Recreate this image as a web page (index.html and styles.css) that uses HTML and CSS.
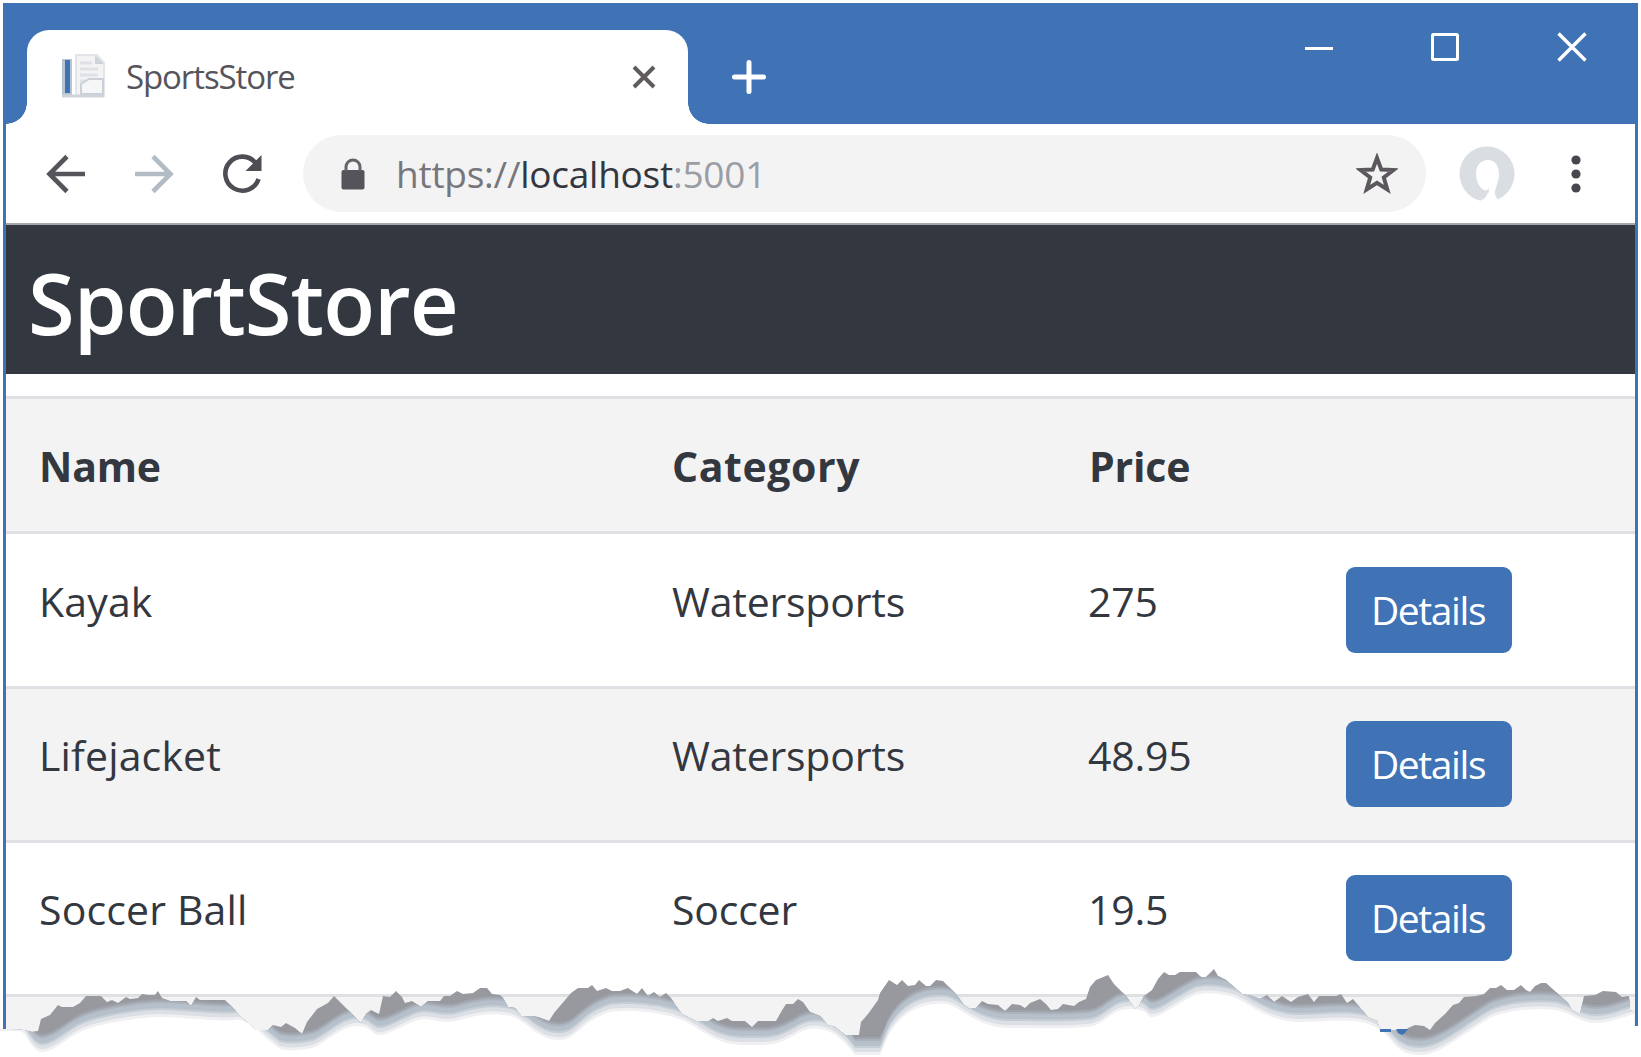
FILE: index.html
```html
<!DOCTYPE html>
<html lang="en">
<head>
<meta charset="utf-8">
<title>SportsStore</title>
<link rel="stylesheet" href="styles.css">
</head>
<body>
<div class="window">
  <header class="titlebar">
    <div class="tab">
      <svg class="favicon" width="44" height="46" viewBox="0 0 44 46">
        <path d="M15 1h21l7 8v33H15z" fill="#f3f3f4" stroke="#e4e5e9" stroke-width="2"/>
        <path d="M34 1v9h9z" fill="#cdd3da"/>
        <path d="M19 9h12M19 15h18M19 21h18M19 27h9" stroke="#dfe1e6" stroke-width="3"/>
        <path d="M20 40V30l8-5h14v15z" fill="#f6f6f7" stroke="#c9d0d8" stroke-width="2"/>
        <path d="M1 5h10v38H1z" fill="#b9c4d0"/>
        <path d="M4 6h5v33H4z" fill="#3f73b6"/>
        <path d="M1 42h42" stroke="#cfd4db" stroke-width="3"/>
      </svg>
      <span class="tab-title">SportsStore</span>
      <svg class="tab-close" width="24" height="24" viewBox="0 0 24 24"><path d="M2 2l20 20M22 2L2 22" stroke="#5f5b5e" stroke-width="4"/></svg>
    </div>
    <svg class="new-tab" width="34" height="34" viewBox="0 0 34 34"><path d="M17 2.500v29M2.500 17h29" stroke="#fff" stroke-width="5" stroke-linecap="round"/></svg>
    <div class="controls">
      <svg width="28" height="30" viewBox="0 0 28 30"><path d="M0 16.500h28" stroke="#fff" stroke-width="3"/></svg>
      <svg width="30" height="30" viewBox="0 0 30 30"><rect x="2.500" y="2.500" width="25" height="25" rx="1" fill="none" stroke="#fff" stroke-width="3"/></svg>
      <svg width="30" height="30" viewBox="0 0 30 30"><path d="M1.500 1.500l27 27M28.500 1.500l-27 27" stroke="#fff" stroke-width="3.400"/></svg>
    </div>
  </header>
  <nav class="toolbar">
    <svg class="nav-icon" width="40" height="40" viewBox="0 0 40 40"><path d="M39 20H4M21 2.500L3.500 20 21 37.500" fill="none" stroke="#55545a" stroke-width="4.600"/></svg>
    <svg class="nav-icon" width="40" height="40" viewBox="0 0 40 40"><path d="M1 20h35M19 2.500L36.500 20 19 37.500" fill="none" stroke="#b3bbc5" stroke-width="4.600"/></svg>
    <svg class="nav-icon" width="42" height="40" viewBox="0 0 42 40"><path d="M36.500 25A17 17 0 1 1 34 9.500" fill="none" stroke="#4e4d53" stroke-width="4.600"/><path d="M39.500 1v16H23.500z" fill="#4e4d53"/></svg>
    <div class="address">
      <svg class="lock" width="24" height="32" viewBox="0 0 24 32"><rect x="0.500" y="12" width="23" height="19.500" rx="2" fill="#55545b"/><path d="M5 13V9a7 7 0 0 1 14 0v4" fill="none" stroke="#66636a" stroke-width="3"/></svg>
      <span class="url"><span class="scheme">https://</span><span class="host">localhost</span><span class="port">:5001</span></span>
      <svg class="star" width="42" height="42" viewBox="0 0 42 42"><path d="M21 5l4.300 11.600 12.200.4-9.700 7.500 3.500 12L21 29.800l-10.300 6.700 3.500-12L4.500 17l12.200-.4z" fill="none" stroke="#5b575c" stroke-width="4"/></svg>
    </div>
    <svg class="avatar" width="56" height="56" viewBox="0 0 56 56"><circle cx="28" cy="28" r="27.500" fill="#dadde1"/><path d="M33 56c-3-3-4-9-3-15-1 3-2 4-5 3-5-3-8-9-8-16 0-9 5-14 12-14s11 6 11 14c0 8-4 13-4 19 0 3 2 6 4 7l-3 3zM22 54c4-1 6-4 7-8l4 8-3 3h-8z" fill="#fff"/></svg>
    <svg class="menu" width="10" height="38" viewBox="0 0 10 38"><g fill="#48474e"><circle cx="5" cy="5" r="4.600"/><circle cx="5" cy="19" r="4.600"/><circle cx="5" cy="33" r="4.600"/></g></svg>
  </nav>
  <h1 class="brand">SportStore</h1>
  <table class="products">
    <colgroup><col class="col-name"><col class="col-category"><col class="col-price"><col></colgroup>
    <thead>
      <tr class="head"><th>Name</th><th class="wide">Category</th><th>Price</th><th></th></tr>
    </thead>
    <tbody>
      <tr class="tall"><td class="name">Kayak</td><td>Watersports</td><td class="price">275</td><td class="action"><a class="btn">Details</a></td></tr>
      <tr class="striped"><td class="name">Lifejacket</td><td>Watersports</td><td class="price">48.95</td><td class="action"><a class="btn">Details</a></td></tr>
      <tr><td class="name">Soccer Ball</td><td>Soccer</td><td class="price">19.5</td><td class="action"><a class="btn">Details</a></td></tr>
      <tr class="striped"><td></td><td></td><td></td><td></td></tr>
    </tbody>
  </table>
</div>
<svg class="torn" width="1641" height="97" viewBox="0 960 1641 97">
  <defs>
    <clipPath id="paper"><path d="M0 1029H6L24 1030 32 1032 38 1031 41 1019 50 1015 58 1005 62 1007 73 1007 80 1003 86 996 101 996 107 1002 112 1000 118 1003 126 997 130 999 138 998 142 994 148 995 155 995 158 991 162 998 170 1001 186 1001 191 1006 196 997 200 1000 225 1000 233 1008 240 1016 256 1030 268 1030 273 1025 281 1027 286 1023 295 1028 302 1034 307 1022 317 1009 328 1003 334 996 340 1002 361 1023 366 1014 371 1010 379 1014 383 996 390 997 396 991 402 997 405 1003 412 1001 421 1007 428 1001 440 1001 444 996 450 996 457 991 463 994 473 993 480 988 487 988 492 994 500 995 503 998 508 1007 515 1008 522 1017 530 1016 538 1017 549 1021 554 1013 571 993 578 988 588 988 592 985 597 991 606 988 612 991 620 991 628 988 637 994 642 988 648 996 654 992 660 997 666 993 671 998 676 1006 682 1014 696 1021 709 1021 713 1018 718 1021 727 1018 732 1021 745 1021 752 1027 758 1021 776 1021 781 1012 786 1004 793 1004 798 999 803 1002 810 1012 820 1016 828 1025 835 1027 845 1035 859 1035 861 1022 868 1014 878 1000 880 993 889 980 897 985 902 980 908 986 915 985 919 980 926 986 930 986 936 980 943 981 949 987 956 994 964 1005 970 1009 976 1008 982 1001 988 1004 998 1005 1005 1011 1012 1004 1020 1005 1025 1008 1030 1003 1040 999 1046 1004 1051 1010 1058 1009 1063 1004 1074 1006 1079 1002 1086 999 1090 987 1096 980 1108 975 1114 984 1119 989 1126 996 1135 1009 1139 1006 1144 996 1152 990 1158 979 1164 972 1169 975 1175 975 1180 972 1196 972 1201 977 1206 977 1214 969 1218 976 1226 980 1242 994 1252 996 1260 999 1267 995 1274 1002 1282 996 1291 1002 1298 997 1308 994 1314 1002 1319 996 1336 996 1341 994 1347 1003 1353 999 1362 1010 1368 1017 1377 1021 1380 1030 1405 1031 1408 1028 1415 1025 1424 1026 1430 1030 1435 1023 1445 1014 1453 1005 1459 1003 1464 997 1476 996 1484 994 1490 988 1496 988 1501 985 1507 990 1514 990 1521 985 1526 990 1530 992 1535 986 1541 983 1546 983 1556 992 1568 1003 1572 1010 1580 1014 1584 996 1595 995 1603 991 1616 992 1622 997 1629 996 1630 1010 1634 1012V1026H1641V1057H0Z"/></clipPath>
    <path id="curl" d="M0 1029H20L25 1032Q34 1050 42 1050C54 1050 64 1038 80 1030S140 1015 160 1015 220 1020 235 1018 262 1035 280 1047C292 1050 302 1048 312 1046S340 1025 355 1024 372 1033 380 1033 400 1025 415 1019 440 1024 460 1018 495 1011 510 1014 535 1036 556 1038 578 1020 610 1010C630 1007 670 1010 690 1022S720 1043 745 1043 775 1045 800 1030C822 1020 840 1032 855 1053L880 1053C886 1042 886 1032 900 1018S930 1001 945 1002 975 1026 1010 1026 1070 1027 1088 1025 1110 1007 1130 1007 1145 1015 1153 1015 1175 1003 1195 993C1210 989 1230 993 1240 998S1270 1020 1300 1020 1365 1012 1385 1032C1395 1042 1400 1053 1420 1053S1460 1034 1490 1016C1510 1007 1540 1006 1555 1008S1580 1021 1595 1021 1620 1016 1634 1012H1641V1090H0Z"/>
  </defs>
  <g clip-path="url(#paper)">
    <path d="M0 960h1641v97H0z" fill="#97999f"/>
    <use href="#curl" y="-16" fill="#9fa3ab"/>
    <use href="#curl" y="-14" fill="#abb2bc"/>
    <use href="#curl" y="-12" fill="#b6c0cb"/>
    <use href="#curl" y="-7" fill="#c5cdd6"/>
    <use href="#curl" y="-5" fill="#dcdfe4"/>
    <use href="#curl" y="-1" fill="#f0f0f2"/>
    <use href="#curl" y="2" fill="#fff"/>
  </g>
  <path d="M1380 1029h11v3h-11zM1396 1029h12l-3 4-3 2-4-2z" fill="#3f73b6"/>
</svg>
</body>
</html>
```
FILE: styles.css
```css
* { box-sizing: border-box; }

body {
  margin: 0;
  height: 1057px;
  overflow: hidden;
  background: #fff;
  color: #33373f;
  font-family: "Open Sans", "Noto Sans", sans-serif;
  position: relative;
}

svg { display: block; flex: none; }

.window {
  margin: 3px 3px 0;
  height: 1054px;
  overflow: hidden;
  border: 3px solid #3f73b6;
  border-width: 0 3px;
}

.titlebar {
  height: 121px;
  padding-left: 21px;
  background: #3f73b6;
  display: flex;
  align-items: flex-end;
}

.tab {
  position: relative;
  width: 661px;
  height: 94px;
  padding: 0 32px 0 34px;
  border-radius: 22px 22px 0 0;
  background: #fff;
  display: flex;
  align-items: center;
}

.tab::before,
.tab::after {
  content: "";
  position: absolute;
  bottom: 0;
  width: 21px;
  height: 21px;
}

.tab::before {
  left: -21px;
  background: radial-gradient(circle at 0 0, transparent 20.5px, #fff 21px);
}

.tab::after {
  right: -21px;
  background: radial-gradient(circle at 100% 0, transparent 20.5px, #fff 21px);
}

.tab-title {
  margin-left: 21px;
  padding-bottom: 2px;
  font-size: 33px;
  color: #55545b;
  letter-spacing: -1.1px;
}

.tab-close { margin-left: auto; }

.new-tab { margin: 0 0 30px 44px; }

.controls {
  margin-left: auto;
  padding-right: 48px;
  align-self: flex-start;
  padding-top: 29px;
  display: flex;
  gap: 97px;
}

.toolbar {
  height: 101px;
  padding: 0 54px 0 40px;
  border-bottom: 2px solid #a5a7ab;
  background: #fff;
  display: flex;
  align-items: center;
}

.nav-icon { margin-right: 48px; }
.nav-icon + .nav-icon + .nav-icon { margin-right: 39px; }

.address {
  width: 1123px;
  height: 77px;
  padding: 0 28px 0 38px;
  border-radius: 39px;
  background: #f3f3f3;
  display: flex;
  align-items: center;
}

.url {
  margin-left: 31px;
  font-size: 37px;
  letter-spacing: -0.25px;
}

.scheme { color: #77767d; }
.host { color: #33373f; }
.port { color: #9b9da4; }
.star { margin-left: auto; }
.avatar { margin-left: 33px; }
.menu { margin-left: auto; }

.brand {
  margin: 0;
  height: 149px;
  padding: 19px 0 0 22px;
  background: #33373f;
  color: #fff;
  font-size: 85px;
  font-weight: 600;
  line-height: 116px;
  letter-spacing: -1px;
}

.products {
  width: 1629px;
  margin-top: 22px;
  border-spacing: 0;
  table-layout: fixed;
  font-size: 41px;
  line-height: 64px;
  letter-spacing: -0.2px;
}

.col-name { width: 633px; }
.col-category { width: 417px; }
.col-price { width: 257px; }

tr { height: 154px; }
.head { height: 135px; }
.tall { height: 155px; }

th,
td {
  padding: 34px 0 0 33px;
  border-top: 3px solid #dfe0e4;
  text-align: left;
  vertical-align: top;
}

.head th,
.tall td { padding-top: 35px; }
.wide { letter-spacing: 0.6px; }
.name { letter-spacing: 0.15px; }
.price { padding-left: 32px; }

.head,
.striped { background: #f3f3f3; }

.products .action { padding-top: 32px; }
.products .tall .action { padding-top: 33px; }

.btn {
  width: 166px;
  height: 86px;
  padding-right: 2px;
  border-radius: 9px;
  background: #3f73b6;
  color: #fff;
  font-size: 39px;
  letter-spacing: -1.4px;
  display: flex;
  align-items: center;
  justify-content: center;
}

.torn {
  position: absolute;
  left: 0;
  top: 960px;
}
```
